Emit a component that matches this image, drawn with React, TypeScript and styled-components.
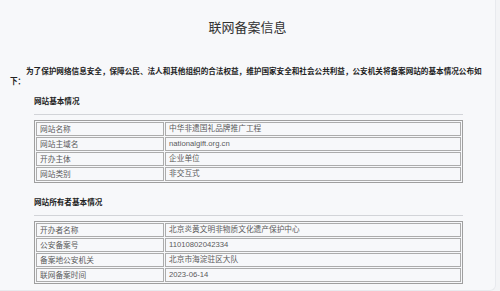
import React from 'react';
import styled, { createGlobalStyle } from 'styled-components';

const GlobalStyle = createGlobalStyle`
  html, body {
    margin: 0;
    padding: 0;
    background: #f3f4f6;
  }
  body {
    font-family: "Noto Sans CJK SC", "Liberation Sans", sans-serif;
    color: #333;
  }
`;

type Row = { label: string; value: string };

const siteRows: Row[] = [
  { label: '网站名称', value: '中华非遗国礼品牌推广工程' },
  { label: '网站主域名', value: 'nationalgift.org.cn' },
  { label: '开办主体', value: '企业单位' },
  { label: '网站类别', value: '非交互式' },
];

const ownerRows: Row[] = [
  { label: '开办者名称', value: '北京炎黄文明非物质文化遗产保护中心' },
  { label: '公安备案号', value: '11010802042334' },
  { label: '备案地公安机关', value: '北京市海淀驻区大队' },
  { label: '联网备案时间', value: '2023-06-14' },
];

const InfoTable: React.FC<{ rows: Row[] }> = ({ rows }) => (
  <Table>
    <tbody>
      {rows.map(r => (
        <tr key={r.label}>
          <LabelCell>{r.label}</LabelCell>
          <ValueCell>{r.value}</ValueCell>
        </tr>
      ))}
    </tbody>
  </Table>
);

export default function App() {
  return (
    <>
      <GlobalStyle />
      <Card>
        <Title>联网备案信息</Title>
        <Intro>
          为了保护网络信息安全，保障公民、法人和其他组织的合法权益，维护国家安全和社会公共利益，公安机关将备案网站的基本情况公布如下：
        </Intro>
        <Section $top={10}>
          <Heading>网站基本情况</Heading>
          <Rule />
          <InfoTable rows={siteRows} />
        </Section>
        <Section $top={14}>
          <Heading>网站所有者基本情况</Heading>
          <Rule />
          <InfoTable rows={ownerRows} />
        </Section>
      </Card>
    </>
  );
}

const Card = styled.div`
  width: 496px;
  height: 291px;
  box-sizing: border-box;
  background: #f7f8fa;
  border: 1px solid #e8eaee;
  border-top: none;
  border-left: none;
  border-radius: 0 0 6px 0;
  overflow: hidden;
  padding-top: 18px;
`;

const Title = styled.h1`
  margin: 0;
  text-align: center;
  font-size: 13px;
  line-height: 18px;
  font-weight: normal;
  color: #333;
`;

const Intro = styled.p`
  margin: 30px 0 0 10px;
  width: 477px;
  font-size: 7.6px;
  line-height: 10px;
  font-weight: bold;
  text-indent: 16px;
  color: #222;
`;

const Section = styled.div<{ $top: number }>`
  margin: ${p => p.$top}px 0 0 34px;
  width: 429px;
`;

const Heading = styled.h2`
  margin: 0;
  font-size: 7.6px;
  line-height: 10px;
  font-weight: bold;
  color: #222;
`;

const Rule = styled.div`
  margin-top: 8px;
  height: 1px;
  background: #d2d4d8;
`;

const Table = styled.table`
  margin-top: 5px;
  width: 100%;
  border: 1px solid #9f9f9f;
  border-spacing: 1px;
  border-collapse: separate;
`;

const Cell = styled.td`
  height: 14px;
  box-sizing: border-box;
  padding: 0 3px;
  border: 1px solid #acacac;
  font-size: 7.7px;
  line-height: 12px;
  color: #5a5a5a;
  white-space: nowrap;
`;

const LabelCell = styled(Cell)`
  width: 128px;
`;

const ValueCell = styled(Cell)`
  font-family: "Liberation Sans", "Noto Sans CJK SC", sans-serif;
`;
